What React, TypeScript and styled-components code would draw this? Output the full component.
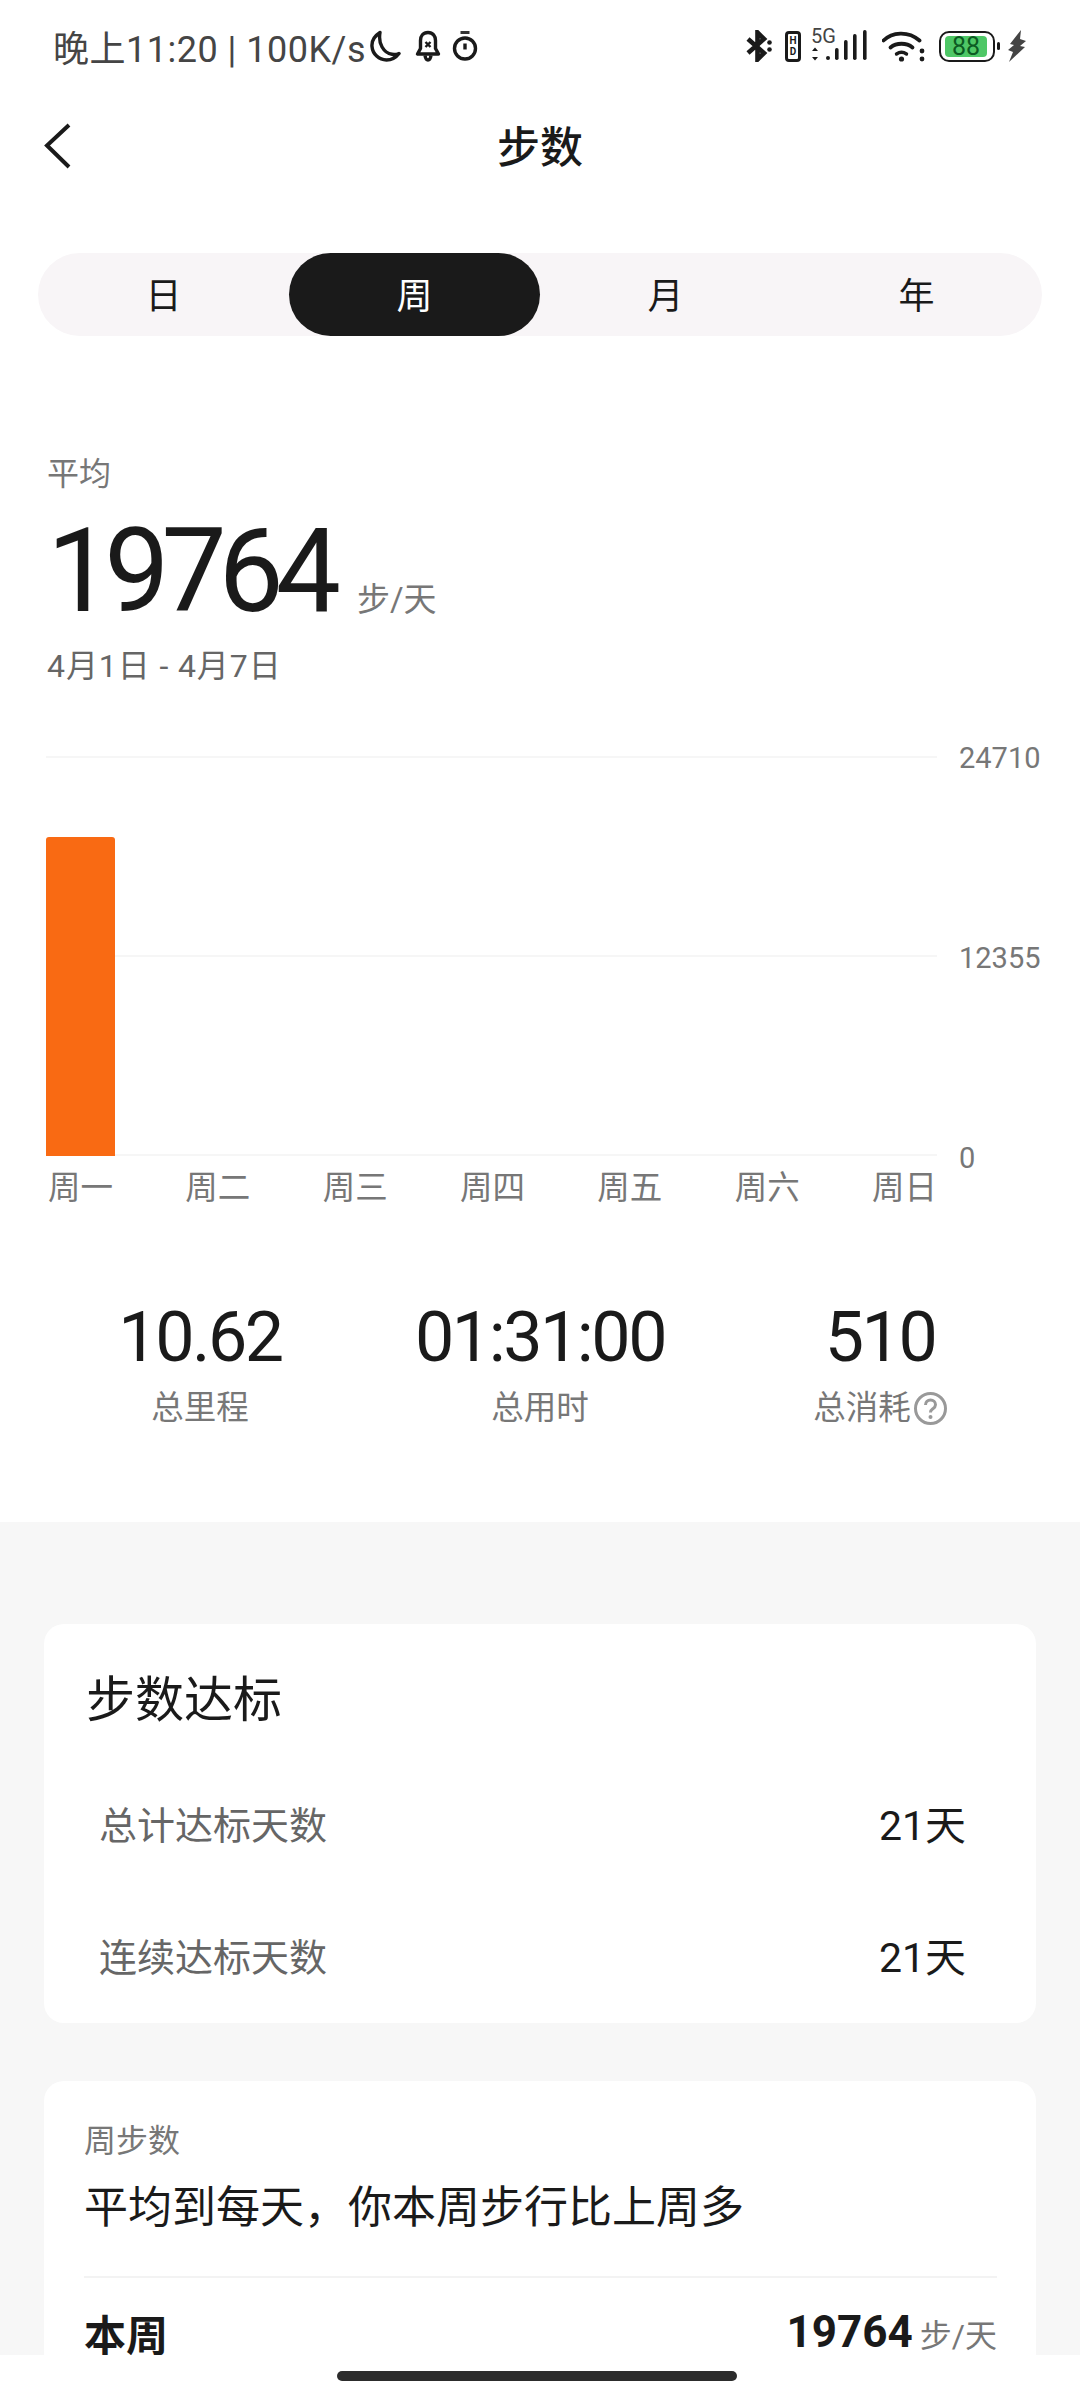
import React from "react";
import styled, { createGlobalStyle } from "styled-components";

const Global = createGlobalStyle`
  html, body { margin: 0; padding: 0; background: #fff; }
  * { box-sizing: border-box; }
  body { font-family: Roboto, "Noto Sans CJK SC", sans-serif; color: #1a1a1a; }
`;

const Page = styled.div`
  width: 1080px;
  height: 2400px;
  display: flex;
  flex-direction: column;
  overflow: hidden;
  background: #fff;
`;
const Scroll = styled.main`
  flex: 1;
  min-height: 0;
  overflow: hidden;
`;

const StatusBar = styled.header`
  height: 92px;
  padding: 0 54px 0 53px;
  display: flex;
  align-items: center;
  justify-content: space-between;
`;
const StatusGroup = styled.div`
  display: flex;
  align-items: center;
`;
const StatusText = styled.span`
  font-size: 36px;
  letter-spacing: 0.5px;
  color: #454545;
  white-space: nowrap;
`;
const Icon = styled.svg<{ $ml?: number }>`
  display: block;
  flex: none;
  margin-left: ${(p) => p.$ml ?? 0}px;
`;
const HdBadge = styled.div`
  width: 16px;
  height: 31px;
  margin-left: 12px;
  border: 3px solid #1a1a1a;
  border-radius: 4px;
  display: flex;
  flex-direction: column;
  align-items: center;
  justify-content: center;
  font-size: 10px;
  line-height: 11px;
  font-weight: 700;
  color: #1a1a1a;
`;
const SignalWrap = styled.div`
  position: relative;
  width: 58px;
  height: 32px;
  margin-left: 10px;
`;
const FiveG = styled.span`
  position: absolute;
  left: 0;
  top: -4px;
  font-size: 20px;
  line-height: 20px;
  color: #444;
`;
const Battery = styled.div`
  width: 56px;
  height: 31px;
  margin-left: 13px;
  padding: 3px 6px 3px 4px;
  border: 2.5px solid #1a1a1a;
  border-radius: 10px;
  display: flex;
`;
const BatteryFill = styled.div`
  flex: 1;
  border-radius: 4px;
  background: #4ec766;
  color: #0c5a22;
  font-size: 25px;
  line-height: 21px;
  text-align: center;
`;

const NavBar = styled.nav`
  position: relative;
  height: 108px;
  padding-bottom: 4px;
  display: flex;
  align-items: center;
  justify-content: center;
`;
const BackIcon = styled.svg`
  position: absolute;
  left: 44px;
  top: 30px;
`;
const Title = styled.h1`
  margin: 0;
  font-size: 43px;
  font-weight: 500;
  color: #1a1a1a;
`;

const Tabs = styled.div`
  margin: 53px 38px 0;
  height: 83px;
  border-radius: 42px;
  background: #f8f5f7;
  display: grid;
  grid-template-columns: repeat(4, 1fr);
`;
const Tab = styled.div<{ $active?: boolean }>`
  display: flex;
  align-items: center;
  justify-content: center;
  padding-bottom: 4px;
  border-radius: 42px;
  font-size: 36px;
  background: ${(p) => (p.$active ? "#1a1a1a" : "transparent")};
  color: ${(p) => (p.$active ? "#fff" : "#1a1a1a")};
`;

const Summary = styled.section`
  margin-top: 116px;
  padding-left: 47px;
`;
const SummaryLabel = styled.div`
  font-size: 32px;
  line-height: 44px;
  color: #777;
`;
const BigRow = styled.div`
  margin-top: 15px;
  height: 120px;
  display: flex;
  align-items: baseline;
`;
const BigNumber = styled.span`
  font-size: 116px;
  line-height: 120px;
  letter-spacing: -8px;
  font-weight: 400;
  color: #1a1a1a;
`;
const BigUnit = styled.span`
  margin-left: 24px;
  font-size: 33px;
  color: #777;
`;
const DateRange = styled.div`
  margin-top: 13px;
  font-size: 32px;
  line-height: 44px;
  letter-spacing: 0.9px;
  color: #666;
`;

const Chart = styled.section`
  margin-top: 68px;
  padding-left: 46px;
  display: flex;
`;
const Plot = styled.div`
  position: relative;
  width: 891px;
  height: 400px;
  display: flex;
  justify-content: space-between;
  align-items: flex-end;
`;
const GridLine = styled.div<{ $top: number }>`
  position: absolute;
  left: 0;
  right: 0;
  top: ${(p) => p.$top}px;
  height: 2px;
  background: #f6f6f6;
`;
const Bar = styled.div`
  position: relative;
  width: 69px;
  background: #f96a13;
  border-radius: 3px 3px 0 0;
`;
const YAxis = styled.div`
  margin: -18px 0 -22px 22px;
  height: 440px;
  display: flex;
  flex-direction: column;
  justify-content: space-between;
  font-size: 29px;
  line-height: 40px;
  color: #777;
`;
const DayRow = styled.div`
  margin: 10px 0 0 46px;
  width: 893px;
  display: flex;
  justify-content: space-between;
`;
const Day = styled.span`
  width: 69px;
  text-align: center;
  font-size: 32.500px;
  line-height: 44px;
  color: #777;
`;

const Stats = styled.section`
  margin-top: 87px;
  padding: 0 30px 92px;
  display: grid;
  grid-template-columns: repeat(3, 1fr);
`;
const Stat = styled.div`
  display: flex;
  flex-direction: column;
  align-items: center;
`;
const StatValue = styled.div`
  font-size: 70px;
  line-height: 80px;
  letter-spacing: -2.500px;
  color: #1a1a1a;
`;
const StatLabel = styled.div`
  margin-top: 9px;
  font-size: 32.500px;
  line-height: 44px;
  color: #777;
  display: flex;
  align-items: center;
  gap: 3px;
`;

const Section = styled.section`
  background: #f7f7f7;
  padding: 102px 44px 0;
`;
const Card = styled.div`
  background: #fff;
  border-radius: 20px;
`;
const GoalCard = styled(Card)`
  padding: 42px 0 3px;
`;
const GoalTitle = styled.h2`
  margin: 0 0 20px 42px;
  font-size: 49px;
  line-height: 70px;
  font-weight: 400;
  color: #1a1a1a;
`;
const GoalRow = styled.div`
  height: 132px;
  padding: 0 70px 0 55px;
  display: flex;
  align-items: center;
  justify-content: space-between;
`;
const GoalLabel = styled.span`
  font-size: 38px;
  color: #666;
`;
const GoalValue = styled.span`
  font-size: 41px;
  color: #1a1a1a;
`;
const WeekCard = styled(Card)`
  margin-top: 58px;
  padding: 38px 39px 60px 40px;
`;
const WeekLabel = styled.div`
  font-size: 32px;
  line-height: 44px;
  color: #777;
`;
const WeekHeadline = styled.div`
  margin-top: 15px;
  font-size: 44px;
  line-height: 60px;
  color: #1a1a1a;
`;
const Divider = styled.div`
  margin-top: 38px;
  height: 2px;
  background: #f3f3f3;
`;
const WeekRow = styled.div`
  margin-top: 24px;
  height: 60px;
  display: flex;
  align-items: center;
  justify-content: space-between;
`;
const WeekName = styled.span`
  font-size: 42px;
  font-weight: 700;
  color: #1a1a1a;
`;
const WeekValue = styled.span`
  font-size: 44px;
  font-weight: 700;
  color: #1a1a1a;
`;
const WeekUnit = styled.span`
  margin-left: 7px;
  font-size: 32px;
  font-weight: 400;
  color: #777;
`;

const GestureArea = styled.footer`
  height: 45px;
  flex: none;
  background: #fff;
  padding: 16px 6px 0 0;
  display: flex;
  justify-content: center;
`;
const GestureBar = styled.div`
  width: 400px;
  height: 10px;
  border-radius: 5px;
  background: #2c2c2c;
`;

const days = ["周一", "周二", "周三", "周四", "周五", "周六", "周日"];
const stepsByDay = [19764, 0, 0, 0, 0, 0, 0];
const MAX = 24710;
const PLOT_H = 399;

export default function App() {
  return (
    <Page>
      <Global />
      <Scroll>
        <StatusBar>
          <StatusGroup>
            <StatusText>晚上11:20 | 100K/s</StatusText>
            <Icon $ml={4} width="31" height="32" viewBox="0 0 31 32" fill="none">
              <path d="M10 2.500C4.500 6 1.500 11 2 16.500 2.600 24 9 30 16.500 30c5 0 9.500-2.500 12.500-6.500-2 .8-4.500 1.200-7 .8C13.500 23 8 13.500 10 2.500Z" stroke="#1a1a1a" strokeWidth="3.400" strokeLinejoin="round" />
            </Icon>
            <Icon $ml={14} width="26" height="32" viewBox="0 0 26 32" fill="none">
              <path d="M13 2.500c-5 0-7.500 3.500-7.500 8v8L2.500 24h21l-3-5.500v-8c0-4.500-2.500-8-7.500-8Z" stroke="#1a1a1a" strokeWidth="3.400" strokeLinejoin="round" />
              <path d="M10 25.500c.5 3 1.500 4.500 3 4.500s2.500-1.500 3-4.500" stroke="#1a1a1a" strokeWidth="3.400" />
              <path d="M10.500 12l5 5M15.500 12l-5 5" stroke="#1a1a1a" strokeWidth="2.400" />
            </Icon>
            <Icon $ml={11} width="26" height="32" viewBox="0 0 26 32" fill="none">
              <path d="M8.500 2.500h9" stroke="#333" strokeWidth="3" />
              <circle cx="13" cy="18.500" r="10.500" stroke="#1a1a1a" strokeWidth="3.400" />
              <path d="M13 13.500v6" stroke="#1a1a1a" strokeWidth="3.400" />
            </Icon>
          </StatusGroup>
          <StatusGroup>
            <Icon width="27" height="32" viewBox="0 0 27 32" fill="none">
              <path d="M2 9 18 23l-6.500 6.500V2.500L18 9 2 23" stroke="#1a1a1a" strokeWidth="4.600" />
              <circle cx="23.500" cy="12.500" r="2.300" fill="#1a1a1a" />
              <circle cx="23.500" cy="19.500" r="2.300" fill="#1a1a1a" />
            </Icon>
            <HdBadge>
              <span>H</span>
              <span>D</span>
            </HdBadge>
            <SignalWrap>
              <FiveG>5G</FiveG>
              <Icon width="58" height="32" viewBox="0 0 58 32" fill="#1a1a1a">
                <path d="M4 17.500l3 3.500H1Z" />
                <path d="M4 30.500 1 27h6Z" />
                <rect x="15" y="26" width="4" height="4" rx="2" />
                <rect x="24" y="18" width="3.600" height="12" rx="1.700" />
                <rect x="33" y="10" width="3.600" height="20" rx="1.700" />
                <rect x="42" y="4" width="3.600" height="26" rx="1.700" />
                <rect x="52" y="0" width="3.600" height="30" rx="1.700" />
              </Icon>
            </SignalWrap>
            <Icon $ml={13} width="44" height="32" viewBox="0 0 44 32" fill="none">
              <path d="M1.500 10.500C10 2 26 0.500 37.500 10.500" stroke="#1a1a1a" strokeWidth="3.800" strokeLinecap="round" />
              <path d="M8.500 17.500c6-5 16-5 22 0" stroke="#1a1a1a" strokeWidth="3.800" strokeLinecap="round" />
              <path d="M14.500 24c3-2 7-2 10 0" stroke="#1a1a1a" strokeWidth="3.400" strokeLinecap="round" />
              <circle cx="19.500" cy="29" r="2.600" fill="#1a1a1a" />
              <circle cx="40" cy="21" r="2.400" fill="#1a1a1a" />
              <circle cx="40" cy="29" r="2.400" fill="#1a1a1a" />
            </Icon>
            <Battery>
              <BatteryFill>88</BatteryFill>
            </Battery>
            <Icon $ml={2} width="4" height="8" viewBox="0 0 4 8" fill="#1a1a1a">
              <rect width="3" height="8" rx="1.500" />
            </Icon>
            <Icon $ml={7} width="18" height="32" viewBox="0 0 18 32" fill="#444">
              <path d="M13 0 2 14l4 1-6 5 5 2-4 10L17 17l-5-1 6-5-6-2Z" />
            </Icon>
          </StatusGroup>
        </StatusBar>

        <NavBar>
          <BackIcon width="28" height="48" viewBox="0 0 28 48" fill="none">
            <path d="M25 3 3 23.500 25 45" stroke="#1a1a1a" strokeWidth="4" />
          </BackIcon>
          <Title>步数</Title>
        </NavBar>

        <Tabs>
          <Tab>日</Tab>
          <Tab $active>周</Tab>
          <Tab>月</Tab>
          <Tab>年</Tab>
        </Tabs>

        <Summary>
          <SummaryLabel>平均</SummaryLabel>
          <BigRow>
            <BigNumber>19764</BigNumber>
            <BigUnit>步/天</BigUnit>
          </BigRow>
          <DateRange>4月1日 - 4月7日</DateRange>
        </Summary>

        <Chart>
          <Plot>
            <GridLine $top={0} />
            <GridLine $top={199} />
            <GridLine $top={398} />
            {stepsByDay.map((s, i) => (
              <Bar key={i} style={{ height: `${(s / MAX) * PLOT_H}px` }} />
            ))}
          </Plot>
          <YAxis>
            <span>24710</span>
            <span>12355</span>
            <span>0</span>
          </YAxis>
        </Chart>
        <DayRow>
          {days.map((d) => (
            <Day key={d}>{d}</Day>
          ))}
        </DayRow>

        <Stats>
          <Stat>
            <StatValue>10.62</StatValue>
            <StatLabel>总里程</StatLabel>
          </Stat>
          <Stat>
            <StatValue>01:31:00</StatValue>
            <StatLabel>总用时</StatLabel>
          </Stat>
          <Stat>
            <StatValue>510</StatValue>
            <StatLabel>
              总消耗
              <Icon width="33" height="33" viewBox="0 0 33 33" fill="none">
                <circle cx="16.500" cy="16.500" r="15" stroke="#999" strokeWidth="3" />
                <path d="M11.500 13c0-3 2.200-5 5-5s5 2 5 4.700c0 2.300-1.500 3.300-3 4.400-1.300.9-2 1.700-2 3.400" stroke="#999" strokeWidth="3" />
                <circle cx="16.500" cy="25" r="2" fill="#999" />
              </Icon>
            </StatLabel>
          </Stat>
        </Stats>

        <Section>
          <GoalCard>
            <GoalTitle>步数达标</GoalTitle>
            <GoalRow>
              <GoalLabel>总计达标天数</GoalLabel>
              <GoalValue>21天</GoalValue>
            </GoalRow>
            <GoalRow>
              <GoalLabel>连续达标天数</GoalLabel>
              <GoalValue>21天</GoalValue>
            </GoalRow>
          </GoalCard>
          <WeekCard>
            <WeekLabel>周步数</WeekLabel>
            <WeekHeadline>平均到每天，你本周步行比上周多</WeekHeadline>
            <Divider />
            <WeekRow>
              <WeekName>本周</WeekName>
              <WeekValue>
                19764
                <WeekUnit>步/天</WeekUnit>
              </WeekValue>
            </WeekRow>
          </WeekCard>
        </Section>
      </Scroll>
      <GestureArea>
        <GestureBar />
      </GestureArea>
    </Page>
  );
}
